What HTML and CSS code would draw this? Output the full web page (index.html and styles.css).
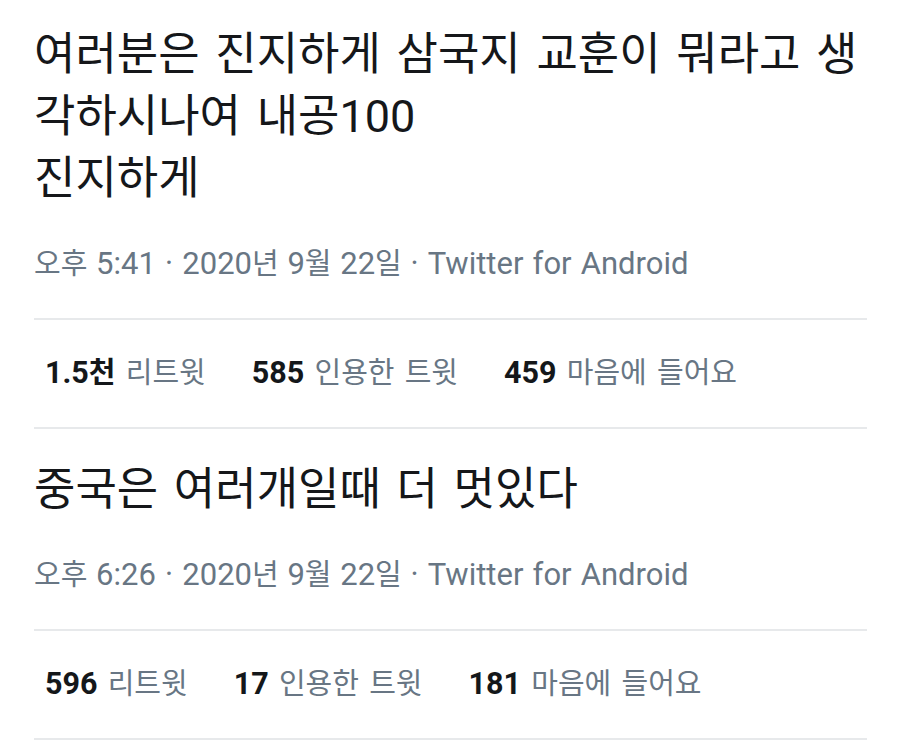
FILE: index.html
```html
<!DOCTYPE html>
<html lang="ko">
<head>
<meta charset="utf-8">
<title>트윗</title>
<link rel="stylesheet" href="styles.css">
</head>
<body>
<main class="page">
  <article class="tweet">
    <p class="text">여러분은 진지하게 삼국지 교훈이 뭐라고 생각하시나여 내공100<br>진지하게</p>
    <div class="meta">오후 <span class="lat">5:41 · 2020</span>년 <span class="lat">9</span>월 <span class="lat">22</span>일 <span class="lat">· Twitter for Android</span></div>
    <div class="stats">
      <span class="stat"><b class="lat">1.5</b><b>천</b> 리트윗</span>
      <span class="stat"><b class="lat">585</b> 인용한 트윗</span>
      <span class="stat"><b class="lat">459</b> 마음에 들어요</span>
    </div>
  </article>
  <article class="tweet">
    <p class="text">중국은 여러개일때 더 멋있다</p>
    <div class="meta">오후 <span class="lat">6:26 · 2020</span>년 <span class="lat">9</span>월 <span class="lat">22</span>일 <span class="lat">· Twitter for Android</span></div>
    <div class="stats">
      <span class="stat"><b class="lat">596</b> 리트윗</span>
      <span class="stat"><b class="lat">17</b> 인용한 트윗</span>
      <span class="stat"><b class="lat">181</b> 마음에 들어요</span>
    </div>
  </article>
</main>
</body>
</html>
```
FILE: styles.css
```css
html, body {
  margin: 0;
  background: #ffffff;
}

body {
  font-family: Roboto, "Noto Sans CJK KR", sans-serif;
  color: #14171a;
}

.page {
  padding: 24px 33px 0 34px;
}

.text {
  margin: 0;
  font-size: 45px;
  line-height: 62px;
  word-spacing: 4.5px;
  color: #15171a;
}

.tweet + .tweet .text {
  margin-top: 30px;
}

.meta {
  margin-top: 36px;
  padding-bottom: 36px;
  font-size: 29px;
  line-height: 36px;
  word-spacing: 1.5px;
  color: #687684;
  border-bottom: 2px solid #e7e9eb;
  white-space: nowrap;
}

.meta .lat {
  font-size: 31px;
}

.stats {
  display: flex;
  gap: 46px;
  padding: 35px 11px 36px;
  font-size: 29px;
  line-height: 36px;
  word-spacing: 3px;
  color: #687684;
  border-bottom: 2px solid #e7e9eb;
  white-space: nowrap;
}

.stats b {
  color: #14171a;
  font-weight: 700;
}

.stats .lat {
  font-size: 30.5px;
}
```
